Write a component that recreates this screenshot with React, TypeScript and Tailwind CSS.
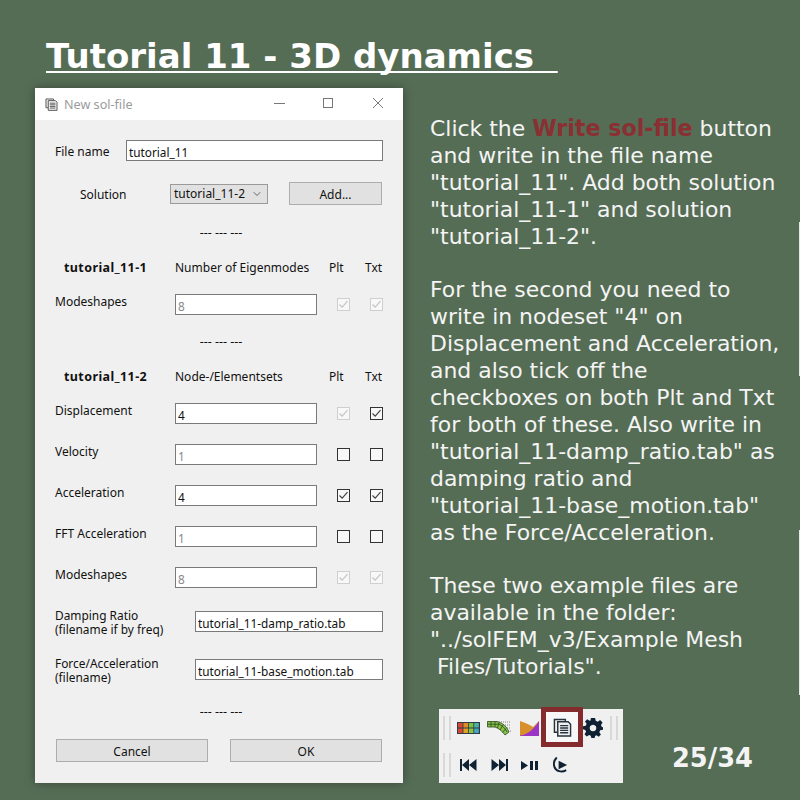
import React from "react";
import { ChevronDown } from "lucide-react";

const dlgFont = "font-['Noto_Sans',sans-serif] text-[12px] leading-[16px] text-[#111]";

function Check({ on, off }: { on?: boolean; off?: boolean }) {
  return (
    <div
      className={`w-[13px] h-[13px] border flex items-center justify-center bg-[#f8f8f8] ${
        off ? "border-[#cfcfcf]" : "border-[#333]"
      }`}
    >
      {on && (
        <svg width="11" height="11" viewBox="0 0 11 11" fill="none">
          <path d="M1.5 5.5 L4.2 8.2 L9.5 2.2" stroke={off ? "#c4c4c4" : "#444"} strokeWidth="1.2" />
        </svg>
      )}
    </div>
  );
}

function Field({ value, width, muted }: { value: string; width: string; muted?: boolean }) {
  return (
    <input
      readOnly
      value={value}
      className={`${width} h-[21px] border border-[#7a7a7a] bg-white pl-[2px] pt-[3px] text-[11.8px] outline-none ${
        muted ? "text-[#8a8a8a]" : "text-[#111]"
      }`}
    />
  );
}

function Dashes({ className }: { className: string }) {
  return <div className={`text-center text-[12.5px] leading-[14px] pl-[4px] ${className}`}>--- --- ---</div>;
}

function Header({ name, label, className }: { name: string; label: string; className: string }) {
  return (
    <div className={`flex items-center h-[16px] ${className}`}>
      <div className="w-[120px] pl-[9px] font-bold text-[12.5px] tracking-[0.4px]">{name}</div>
      <div className="w-[154px]">{label}</div>
      <div className="w-[36px]">Plt</div>
      <div>Txt</div>
    </div>
  );
}

function DataRow({
  label,
  value,
  muted,
  plt,
  txt,
  className,
}: {
  label: string;
  value: string;
  muted?: boolean;
  plt: { on?: boolean; off?: boolean };
  txt: { on?: boolean; off?: boolean };
  className: string;
}) {
  return (
    <div className={`flex items-center h-[21px] ${className}`}>
      <div className="w-[120px] -mt-[6px]">{label}</div>
      <Field value={value} width="w-[142px]" muted={muted} />
      <div className="ml-[20px]">
        <Check {...plt} />
      </div>
      <div className="ml-[20px]">
        <Check {...txt} />
      </div>
    </div>
  );
}

function FileRow({ a, b, value, className }: { a: string; b: string; value: string; className: string }) {
  return (
    <div className={`flex items-center h-[21px] ${className}`}>
      <div className="w-[140px] text-[11.9px] leading-[14px] mt-[1px]">
        {a}
        <br />
        {b}
      </div>
      <Field value={value} width="w-[188px]" />
    </div>
  );
}

function CopyIcon({ size, color }: { size: number; color: string }) {
  return (
    <svg width={size} height={size} viewBox="0 0 20 20" fill="none">
      <path d="M13 3.5 V1.5 H1.5 V15 H4.5" stroke={color} strokeWidth="1.5" fill="#f0f0f0" />
      <path d="M5 4 H16 L18.5 6.5 V19 H5 Z" stroke={color} strokeWidth="1.5" fill="#f0f0f0" />
      <path d="M7.5 8 H16 M7.5 10.500 H16 M7.5 13 H16 M7.5 15.500 H16" stroke={color} strokeWidth="1.4" />
    </svg>
  );
}

function Grip() {
  return (
    <div className="flex gap-[4px] h-[24px]">
      <div className="w-[2px] bg-[#d8d8d8]" />
      <div className="w-[2px] bg-[#d8d8d8]" />
    </div>
  );
}

function Toolbar() {
  const cells = ["#d8472f", "#e08a2a", "#7fbf3f", "#4fb0a8", "#d8472f", "#e0a02a", "#8fc440", "#45a8c0"];
  return (
    <div className="relative w-[184px] h-[74px] bg-[#f0f0f0] flex flex-col">
      <div className="flex items-center h-[38px] pl-[4px] pr-[5px]">
        <Grip />
        <svg width="23" height="12" viewBox="0 0 23 12" className="ml-[6px]">
          <rect width="23" height="12" fill="#2e3c48" />
          {cells.map((c, i) => (
            <rect key={i} x={1 + (i % 4) * 5.4} y={i < 4 ? 1 : 6.5} width="4.6" height="4.5" fill={c} />
          ))}
        </svg>
        <svg width="24" height="15" viewBox="0 0 24 15" className="ml-[7px]">
          <path d="M10 1 H24 M16 4 H24 M20 7 H24 M23 10 H24" stroke="#888" strokeWidth="1" strokeDasharray="1 1" />
          <path d="M0.500 0.500 H10 C16 2 20 6 22 11 L18 14 C15 10 11 6.500 7 6 H0.500 Z" fill="#86c048" stroke="#2d4a1e" strokeWidth="0.8" />
          <path d="M4 0.500 V6 M8 0.500 V6 M12 1.500 L10.500 7 M16 4 L13 9 M19 7.500 L15.500 11.500 M0.500 3.200 H12 C15 4.500 18 7 20 11" stroke="#2d4a1e" strokeWidth="0.8" fill="none" />
        </svg>
        <svg width="19" height="15" viewBox="0 0 19 15" className="ml-[9px]">
          <path d="M0 0 C6 2 10 4 13 6 L19 0 V15 H0 Z" fill="#d8902c" />
          <path d="M0 14.500 C8 13.500 14 8 19 0 V15 H0 Z" fill="#9a35c8" />
        </svg>
        <div className="ml-[44px]">
          <svg width="20" height="20" viewBox="0 0 24 24" fill="#0f2233" className="block">
            <path
              fillRule="evenodd"
              d="M9.500 0 H14.500 L15.300 3.400 L17.600 4.400 L20.500 2.500 L23.500 5.500 L21.600 8.400 L22.600 10.700 L24 11 V14 L20.600 14.700 L19.600 17 L21.500 19.900 L18.900 22.500 L16 20.700 L14.500 21.500 L14 24 H10 L9.300 21.300 L7.400 20.400 L4.500 22.200 L1.800 19.500 L3.700 16.600 L2.700 14.300 L0 13.600 V10 L3.300 9.300 L4.300 7 L2.400 4.100 L5 1.500 L7.900 3.400 L9 2.900 Z M12 8 A4 4 0 1 0 12.010 8 Z"
            />
          </svg>
        </div>
        <div className="ml-auto">
          <Grip />
        </div>
      </div>
      <div className="flex items-center h-[36px] pl-[4px] pr-[5px]">
        <Grip />
        <svg width="17" height="12" viewBox="0 0 17 12" fill="#0f2233" className="ml-[9px]">
          <rect x="0" y="0" width="2" height="12" />
          <path d="M9 0 V12 L2 6 Z M16.500 0 V12 L9 6 Z" />
        </svg>
        <svg width="17" height="12" viewBox="0 0 17 12" fill="#0f2233" className="ml-[14px]">
          <rect x="15" y="0" width="2" height="12" />
          <path d="M8 0 V12 L15 6 Z M0.500 0 V12 L8 6 Z" />
        </svg>
        <svg width="17" height="9" viewBox="0 0 17 9" fill="#0f2233" className="ml-[13px]">
          <path d="M0 0 V9 L7 4.500 Z" />
          <rect x="9" y="0" width="3" height="9" />
          <rect x="14" y="0" width="3" height="9" />
        </svg>
        <svg width="16" height="18" viewBox="0 0 17 18" fill="none" className="ml-[15px]">
          <path d="M4 1 C1 4 0.500 8 1.500 11 C3 15.500 9 17.500 14 14.500" stroke="#0f2233" strokeWidth="2" />
          <path d="M6 4.500 L15 9 L6 13.500 Z" fill="#0f2233" />
        </svg>
      </div>
      {/* red highlight over the active button */}
      <div className="absolute left-[102px] -top-[2px] w-[42px] h-[40px] border-[5px] border-[#832b2d] bg-[#f7f7f7] flex items-center justify-center">
        <CopyIcon size={19} color="#26323c" />
      </div>
    </div>
  );
}

function Dialog() {
  return (
    <div className={`w-[368px] h-[695px] bg-[#f0f0f0] shadow-[0_0_10px_rgba(0,0,0,0.35)] ${dlgFont}`}>
      <div className="h-[32px] bg-white flex items-center pl-[10px] text-[#9b9b9b]">
        <CopyIcon size={13} color="#555" />
        <div className="ml-[6px] mt-[2px] text-[12.6px]">New sol-file</div>
        <div className="ml-auto pr-[20px] -mt-[2px] flex items-center">
          <svg width="11" height="1" viewBox="0 0 11 1">
            <rect width="11" height="1" fill="#777" />
          </svg>
          <svg width="10" height="10" viewBox="0 0 10 10" fill="none" className="ml-[38px]">
            <rect x="0.500" y="0.500" width="9" height="9" stroke="#777" />
          </svg>
          <svg width="10" height="10" viewBox="0 0 10 10" fill="none" className="ml-[40px]">
            <path d="M0 0 L10 10 M10 0 L0 10" stroke="#777" />
          </svg>
        </div>
      </div>
      <div className="pl-[20px] pr-[20px]">
        <div className="flex items-center h-[21px] mt-[20px]">
          <div className="w-[71px] mt-[2px]">File name</div>
          <Field value="tutorial_11" width="w-[257px]" />
        </div>
        <div className="flex items-center h-[23px] mt-[21px]">
          <div className="w-[115px] pl-[25px] mt-[2px]">Solution</div>
          <div className="w-[98px] h-[20px] border border-[#9a9a9a] bg-[#e1e1e1] flex items-center pl-[3px]">
            tutorial_11-2
            <ChevronDown size={12} strokeWidth={1.2} className="ml-auto mr-[4px]" />
          </div>
          <button className="ml-[21px] w-[93px] h-[23px] pt-[2px] border border-[#adadad] bg-[#e1e1e1]">Add...</button>
        </div>
        <Dashes className="mt-[21px]" />
        <Header name="tutorial_11-1" label="Number of Eigenmodes" className="mt-[20px]" />
        <DataRow label="Modeshapes" value="8" muted plt={{ on: true, off: true }} txt={{ on: true, off: true }} className="mt-[18px]" />
        <Dashes className="mt-[20px]" />
        <Header name="tutorial_11-2" label="Node-/Elementsets" className="mt-[20px]" />
        <DataRow label="Displacement" value="4" plt={{ on: true, off: true }} txt={{ on: true }} className="mt-[18px]" />
        <DataRow label="Velocity" value="1" muted plt={{}} txt={{}} className="mt-[20px]" />
        <DataRow label="Acceleration" value="4" plt={{ on: true }} txt={{ on: true }} className="mt-[20px]" />
        <DataRow label="FFT Acceleration" value="1" muted plt={{}} txt={{}} className="mt-[20px]" />
        <DataRow label="Modeshapes" value="8" muted plt={{ on: true, off: true }} txt={{ on: true, off: true }} className="mt-[20px]" />
        <FileRow a="Damping Ratio" b="(filename if by freq)" value="tutorial_11-damp_ratio.tab" className="mt-[23px]" />
        <FileRow a="Force/Acceleration" b="(filename)" value="tutorial_11-base_motion.tab" className="mt-[27px]" />
        <Dashes className="mt-[25px]" />
        <div className="flex mt-[20px] pl-[1px]">
          <button className="w-[152px] h-[23px] pt-[2px] border border-[#adadad] bg-[#e1e1e1]">Cancel</button>
          <button className="ml-[22px] w-[152px] h-[23px] pt-[2px] border border-[#adadad] bg-[#e1e1e1]">OK</button>
        </div>
      </div>
    </div>
  );
}

function Line({ children }: { children: React.ReactNode }) {
  return <div className="h-[27px] whitespace-pre">{children}</div>;
}

export default function App() {
  return (
    <div className="relative w-[800px] h-[800px] overflow-hidden bg-[#566d55] font-['DejaVu_Sans',sans-serif] text-[#f4f4f4]">
      <div className="pl-[46px] pt-[35px] h-[88px] text-[34px] leading-[42px] font-bold text-white whitespace-pre underline decoration-[2px] underline-offset-[3px] [text-decoration-skip-ink:none]">
        {"Tutorial 11 - 3D dynamics  "}
      </div>
      <div className="flex pl-[35px]">
        <Dialog />
        <div className="ml-[27px] w-[370px] flex flex-col">
          <div className="mt-[27px] text-[21.95px] leading-[27px]">
            <Line>
              Click the <span className="font-bold text-[22.2px] text-[#8a2f32]">Write sol-file</span> button
            </Line>
            <Line>and write in the file name</Line>
            <Line>"tutorial_11". Add both solution</Line>
            <Line>"tutorial_11-1" and solution</Line>
            <Line>"tutorial_11-2".</Line>
            <div className="h-[26px]" />
            <Line>For the second you need to</Line>
            <Line>write in nodeset "4" on</Line>
            <Line>Displacement and Acceleration,</Line>
            <Line>and also tick off the</Line>
            <Line>checkboxes on both Plt and Txt</Line>
            <Line>for both of these. Also write in</Line>
            <Line>"tutorial_11-damp_ratio.tab" as</Line>
            <Line>damping ratio and</Line>
            <Line>"tutorial_11-base_motion.tab"</Line>
            <Line>as the Force/Acceleration.</Line>
            <div className="h-[26px]" />
            <Line>These two example files are</Line>
            <Line>available in the folder:</Line>
            <Line>"../solFEM_v3/Example Mesh</Line>
            <Line> Files/Tutorials".</Line>
          </div>
          <div className="flex items-center mt-[29px] pl-[9px]">
            <Toolbar />
            <div className="ml-[49px] mt-[23px] text-[25.7px] leading-[32px] font-bold text-[#f4f4f4]">25/34</div>
          </div>
        </div>
      </div>
      {/* slivers of white at the slide's right edge */}
      <div className="absolute right-0 top-[222px] w-px h-[154px] bg-[#e8e8e8]" />
      <div className="absolute right-0 top-[530px] w-px h-[165px] bg-[#e8e8e8]" />
    </div>
  );
}
